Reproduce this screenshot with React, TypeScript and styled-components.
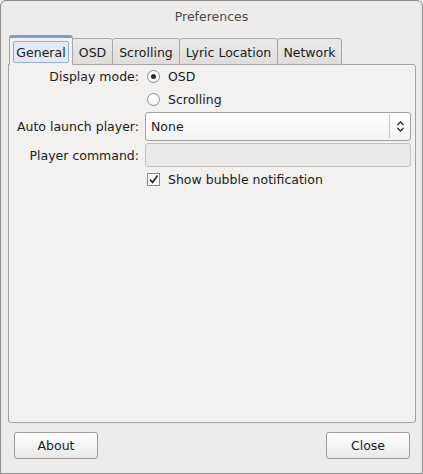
import React from "react";
import styled, { createGlobalStyle } from "styled-components";

const Global = createGlobalStyle`
  html, body { margin: 0; padding: 0; background: #edeceb; }
  body { font-family: "DejaVu Sans", "Noto Sans", sans-serif; font-size: 12.5px; color: #1b1b1b; }
  * { box-sizing: border-box; }
`;

const Window = styled.div`
  width: 423px;
  height: 474px;
  border: 1px solid #8e8e8e;
  border-radius: 6px 6px 0 0;
  background: #edeceb;
  display: flex;
  flex-direction: column;
  overflow: hidden;
`;

const TitleBar = styled.div`
  height: 34px;
  display: flex;
  justify-content: center;
  padding-top: 8px;
  color: #4a4a4a;
`;

const Body = styled.div`
  flex: 1;
  display: flex;
  flex-direction: column;
  padding: 0 6px 0 7px;
`;

const TabBar = styled.div`
  height: 29px;
  display: flex;
  align-items: flex-end;
  padding-left: 1px;
  position: relative;
  z-index: 1;
`;

const Tab = styled.div<{ $active?: boolean; $w: number }>`
  width: ${(p) => p.$w + 1}px;
  margin-right: -1px;
  height: ${(p) => (p.$active ? 30 : 27)}px;
  margin-bottom: -1px;
  display: flex;
  align-items: center;
  justify-content: center;
  border: 1px solid #a8a7a5;
  border-bottom: ${(p) => (p.$active ? "none" : "1px solid #a8a7a5")};
  border-radius: 3px 3px 0 0;
  background: ${(p) =>
    p.$active ? "#f2f1f0" : "linear-gradient(#ebeae8, #dedddb)"};
  border-top: ${(p) => (p.$active ? "3px solid #7b9fcf" : "1px solid #a8a7a5")};
  padding-top: ${(p) => (p.$active ? 0 : 1)}px;
  color: #1b1b1b;
  position: relative;
  z-index: ${(p) => (p.$active ? 2 : 1)};
`;

const Focus = styled.div`
  width: 56px;
  height: 22px;
  border: 1px solid #93b0d6;
  border-radius: 2px;
  background: #e2eaf4;
  display: flex;
  align-items: center;
  justify-content: center;
  padding-top: 1px;
`;

const Pane = styled.div`
  flex: 1;
  background: #f2f1f0;
  border: 1px solid #a3a2a0;
  border-radius: 0 3px 3px 3px;
  padding: 0 4px 0 0;
`;

const Form = styled.div`
  display: grid;
  grid-template-columns: 130px 1fr;
  column-gap: 6px;
  row-gap: 1px;
  align-items: center;
`;

const Label = styled.div<{ $h: number; $mt?: number }>`
  height: ${(p) => p.$h}px;
  margin-top: ${(p) => p.$mt || 0}px;
  display: flex;
  align-items: center;
  justify-content: flex-end;
  white-space: nowrap;
`;

const Option = styled.div<{ $h: number; $mt?: number }>`
  height: ${(p) => p.$h}px;
  margin-top: ${(p) => p.$mt || 0}px;
  display: flex;
  align-items: center;
  gap: 8px;
  padding-left: 2px;
`;

const Radio = styled.span<{ $on?: boolean }>`
  width: 13px;
  height: 13px;
  border-radius: 50%;
  border: 1px solid #8c8c8c;
  background: linear-gradient(#ffffff, #f4f4f4);
  display: flex;
  align-items: center;
  justify-content: center;
  &::after {
    content: "";
    display: ${(p) => (p.$on ? "block" : "none")};
    width: 5px;
    height: 5px;
    border-radius: 50%;
    background: #2a2a2a;
  }
`;

const Check = styled.span`
  width: 13px;
  height: 13px;
  border: 1px solid #8c8c8c;
  background: #ffffff;
  display: flex;
  align-items: center;
  justify-content: center;
`;

const Combo = styled.div`
  height: 29px;
  margin-top: 1px;
  border: 1px solid #a2a2a2;
  border-radius: 3px;
  background: linear-gradient(#ffffff, #f3f3f3);
  display: flex;
  align-items: center;
`;

const ComboText = styled.div`
  flex: 1;
  padding-left: 5px;
`;

const ComboArrow = styled.div`
  width: 21px;
  height: 23px;
  border-left: 1px solid #c8c8c8;
  display: flex;
  align-items: center;
  justify-content: center;
`;

const Input = styled.div`
  height: 24px;
  margin-top: 1px;
  border: 1px solid #c3c2c0;
  border-radius: 3px;
  background: #eae9e8;
`;

const Empty = styled.div``;

const ButtonRow = styled.div`
  display: flex;
  justify-content: space-between;
  padding: 9px 12px 14px 13px;
`;

const Button = styled.div`
  width: 84px;
  height: 27px;
  border: 1px solid #9c9c9c;
  border-radius: 3px;
  background: linear-gradient(#ffffff, #e9e9e9);
  display: flex;
  align-items: center;
  justify-content: center;
  color: #1b1b1b;
`;

export default function App() {
  return (
    <>
      <Global />
      <Window>
        <TitleBar>Preferences</TitleBar>
        <Body>
          <TabBar>
            <Tab $active $w={63}>
              <Focus>General</Focus>
            </Tab>
            <Tab $w={40}>OSD</Tab>
            <Tab $w={67}>Scrolling</Tab>
            <Tab $w={98}>Lyric Location</Tab>
            <Tab $w={64}>Network</Tab>
          </TabBar>
          <Pane>
            <Form>
              <Label $h={22}>Display mode:</Label>
              <Option $h={22}>
                <Radio $on />
                OSD
              </Option>
              <Empty />
              <Option $h={22}>
                <Radio />
                Scrolling
              </Option>
              <Label $h={29} $mt={1}>Auto launch player:</Label>
              <Combo>
                <ComboText>None</ComboText>
                <ComboArrow>
                  <svg width="9" height="13" viewBox="0 0 9 13">
                    <path d="M1.5 5 L4.5 2 L7.5 5 M1.5 8 L4.5 11 L7.5 8" fill="none" stroke="#2a2a2a" strokeWidth="1.3" />
                  </svg>
                </ComboArrow>
              </Combo>
              <Label $h={24} $mt={1}>Player command:</Label>
              <Input />
              <Empty />
              <Option $h={22}>
                <Check>
                  <svg width="11" height="11" viewBox="0 0 11 11">
                    <path d="M2 5.5 L4.5 8.5 L9.5 1.5" fill="none" stroke="#222" strokeWidth="1.6" />
                  </svg>
                </Check>
                Show bubble notification
              </Option>
            </Form>
          </Pane>
        </Body>
        <ButtonRow>
          <Button>About</Button>
          <Button>Close</Button>
        </ButtonRow>
      </Window>
    </>
  );
}
